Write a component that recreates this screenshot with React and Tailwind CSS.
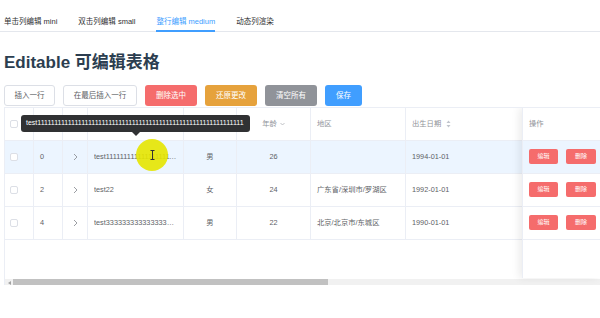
import React from "react";

const ONES = "1".repeat(61);

function Chevron({ dir = "right", className = "" }) {
  if (dir === "right") {
    return (
      <svg width="5" height="8" viewBox="0 0 5 8" className={className}>
        <path d="M1 1 L4 4 L1 7" fill="none" stroke="currentColor" strokeWidth="0.9" />
      </svg>
    );
  }
  return (
    <svg width="5" height="4" viewBox="0 0 5 4" className={className}>
      <path d="M0.5 1 L2.5 3 L4.5 1" fill="none" stroke="currentColor" strokeWidth="0.8" />
    </svg>
  );
}

function SortCaret() {
  return (
    <svg width="5" height="8" viewBox="0 0 5 8" className="ml-[5px]">
      <path d="M2.5 0.5 L4.5 3 L0.5 3 Z" fill="#c0c4cc" />
      <path d="M2.5 7.5 L4.5 5 L0.5 5 Z" fill="#c0c4cc" />
    </svg>
  );
}

function Checkbox() {
  return <div className="w-[8px] h-[8px] border border-[#dcdfe6] rounded-[2px] bg-white" />;
}

const rows = [
  { idx: "0", name: "test" + "1".repeat(21), sex: "男", age: "26", region: "", date: "1994-01-01", hl: true },
  { idx: "2", name: "test22", sex: "女", age: "24", region: "广东省/深圳市/罗湖区", date: "1992-01-01" },
  { idx: "4", name: "test" + "3".repeat(19), sex: "男", age: "22", region: "北京/北京市/东城区", date: "1990-01-01" },
];

function Row({ r, header }) {
  const cell = "h-full border-r border-[#ebeef5] flex items-center shrink-0 min-w-0";
  return (
    <div className={`flex h-[33px] border-b border-[#ebeef5] ${r && r.hl ? "bg-[#ecf5ff]" : "bg-white"} ${header ? "text-[#909399]" : "text-[#606266]"}`}>
      <div className={`${cell} w-[29px] pl-[5px]`}><Checkbox /></div>
      <div className={`${cell} w-[29px] pl-[6px]`}>{header ? "" : r.idx}</div>
      <div className={`${cell} w-[25px] justify-center text-[#909399]`}>{header ? null : <Chevron />}</div>
      <div className={`${cell} w-[96px] px-[6px] overflow-hidden`}>
        {header ? (
          <span className="invisible">名字</span>
        ) : (
          <span className="block min-w-0 w-full truncate">{r.name}</span>
        )}
      </div>
      <div className={`${cell} w-[53px] justify-center`}>{header ? <span className="invisible">性别</span> : r.sex}</div>
      <div className={`${cell} w-[74px] justify-center`}>
        {header ? (
          <span className="flex items-center">年龄<Chevron dir="down" className="ml-[3px] text-[#b0b3b8]" /></span>
        ) : r.age}
      </div>
      <div className={`${cell} w-[95px] pl-[6px]`}>{header ? "地区" : r.region}</div>
      <div className={`${cell} w-[200px] pl-[6px]`}>
        {header ? <span className="flex items-center">出生日期<SortCaret /></span> : r.date}
      </div>
    </div>
  );
}

function FixedRow({ r, header }) {
  return (
    <div className={`flex items-center h-[33px] border-b border-[#ebeef5] pl-[6px] ${r && r.hl ? "bg-[#ecf5ff]" : "bg-white"}`}>
      {header ? (
        <span className="text-[#909399]">操作</span>
      ) : (
        <div className="flex gap-[8px] -mt-[1px]">
          <div className="w-[29px] h-[15px] rounded-[2px] bg-[#f56c6c] text-white text-[6px] flex items-center justify-center">编辑</div>
          <div className="w-[30px] h-[15px] rounded-[2px] bg-[#f56c6c] text-white text-[6px] flex items-center justify-center">删除</div>
        </div>
      )}
    </div>
  );
}

export default function App() {
  const btn = "h-[21px] rounded-[3px] flex items-center justify-center text-[7.5px] shrink-0";
  return (
    <div className="relative w-[600px] h-[318px] bg-white overflow-hidden font-['Liberation_Sans','Noto_Sans_CJK_SC',sans-serif] text-[7.3px]">
      {/* tabs */}
      <div className="flex h-[32px] border-b border-[#e4e7ed] pl-[4px] gap-[21px] text-[7.5px] text-[#303133]">
        <div className="h-[31px] pt-[14px] leading-[16px]">单击列编辑 mini</div>
        <div className="h-[31px] pt-[14px] leading-[16px]">双击列编辑 small</div>
        <div className="h-[32px] pt-[14px] leading-[16px] border-b-2 border-[#409eff] text-[#409eff]">整行编辑 medium</div>
        <div className="h-[31px] pt-[14px] leading-[16px]">动态列渲染</div>
      </div>

      {/* title */}
      <div className="mt-[19px] pl-[4px] text-[17px] font-bold leading-[24px] text-[#2c3e50]">Editable 可编辑表格</div>

      {/* buttons */}
      <div className="mt-[10px] flex gap-[8px] pl-[4px]">
        <div className={`${btn} w-[51px] border border-[#dcdfe6] text-[#606266] bg-white`}>插入一行</div>
        <div className={`${btn} w-[74px] border border-[#dcdfe6] text-[#606266] bg-white`}>在最后插入一行</div>
        <div className={`${btn} w-[52px] bg-[#f56c6c] text-white`}>删除选中</div>
        <div className={`${btn} w-[52px] bg-[#e6a23c] text-white`}>还原更改</div>
        <div className={`${btn} w-[52px] bg-[#909399] text-white`}>清空所有</div>
        <div className={`${btn} w-[37px] bg-[#409eff] text-white`}>保存</div>
      </div>

      {/* table */}
      <div className="relative mt-[1px] ml-[4px] w-[596px] h-[178px] overflow-hidden border-l border-t border-[#ebeef5]">
        <div className="w-[700px]">
          <Row header />
          {rows.map((r, i) => (
            <Row key={i} r={r} />
          ))}
        </div>
        <div className="h-[39px]" />
        <div className="flex h-[7px] bg-[#f1f1f1]">
          <div className="w-[8px] h-full flex items-center justify-center">
            <svg width="3" height="4" viewBox="0 0 3 4"><path d="M3 0 L0 2 L3 4 Z" fill="#a3a3a3" /></svg>
          </div>
          <div className="w-[315px] h-full bg-[#c1c1c1]" />
        </div>

        {/* fixed right column */}
        <div className="absolute right-0 top-0 w-[78px] h-[170px] bg-white shadow-[-3px_0_8px_rgba(0,0,0,0.08)] border-l border-[#ebeef5]">
          <FixedRow header />
          {rows.map((r, i) => (
            <FixedRow key={i} r={r} />
          ))}
        </div>
      </div>

      {/* tooltip */}
      <div className="absolute left-[21px] top-[115px] w-[229px] h-[17px] rounded-[3px] bg-[#303133] text-white text-[7px] pl-[5px] flex items-center whitespace-nowrap overflow-hidden">
        {"test" + ONES}
      </div>
      <div className="absolute left-[132px] top-[132px] w-0 h-0 border-l-[4px] border-r-[4px] border-t-[4px] border-l-transparent border-r-transparent border-t-[#303133]" />

      {/* cursor highlight */}
      <div className="absolute left-[136px] top-[139px] w-[32px] h-[32px] rounded-full bg-[#e6e600] opacity-90" />
      <svg className="absolute left-[150px] top-[150px]" width="5" height="10" viewBox="0 0 5 10">
        <path d="M0.5 0.5 H4.5 M2.5 0.5 V9.5 M0.5 9.5 H4.5" stroke="#333" strokeWidth="1" fill="none" />
      </svg>
    </div>
  );
}
